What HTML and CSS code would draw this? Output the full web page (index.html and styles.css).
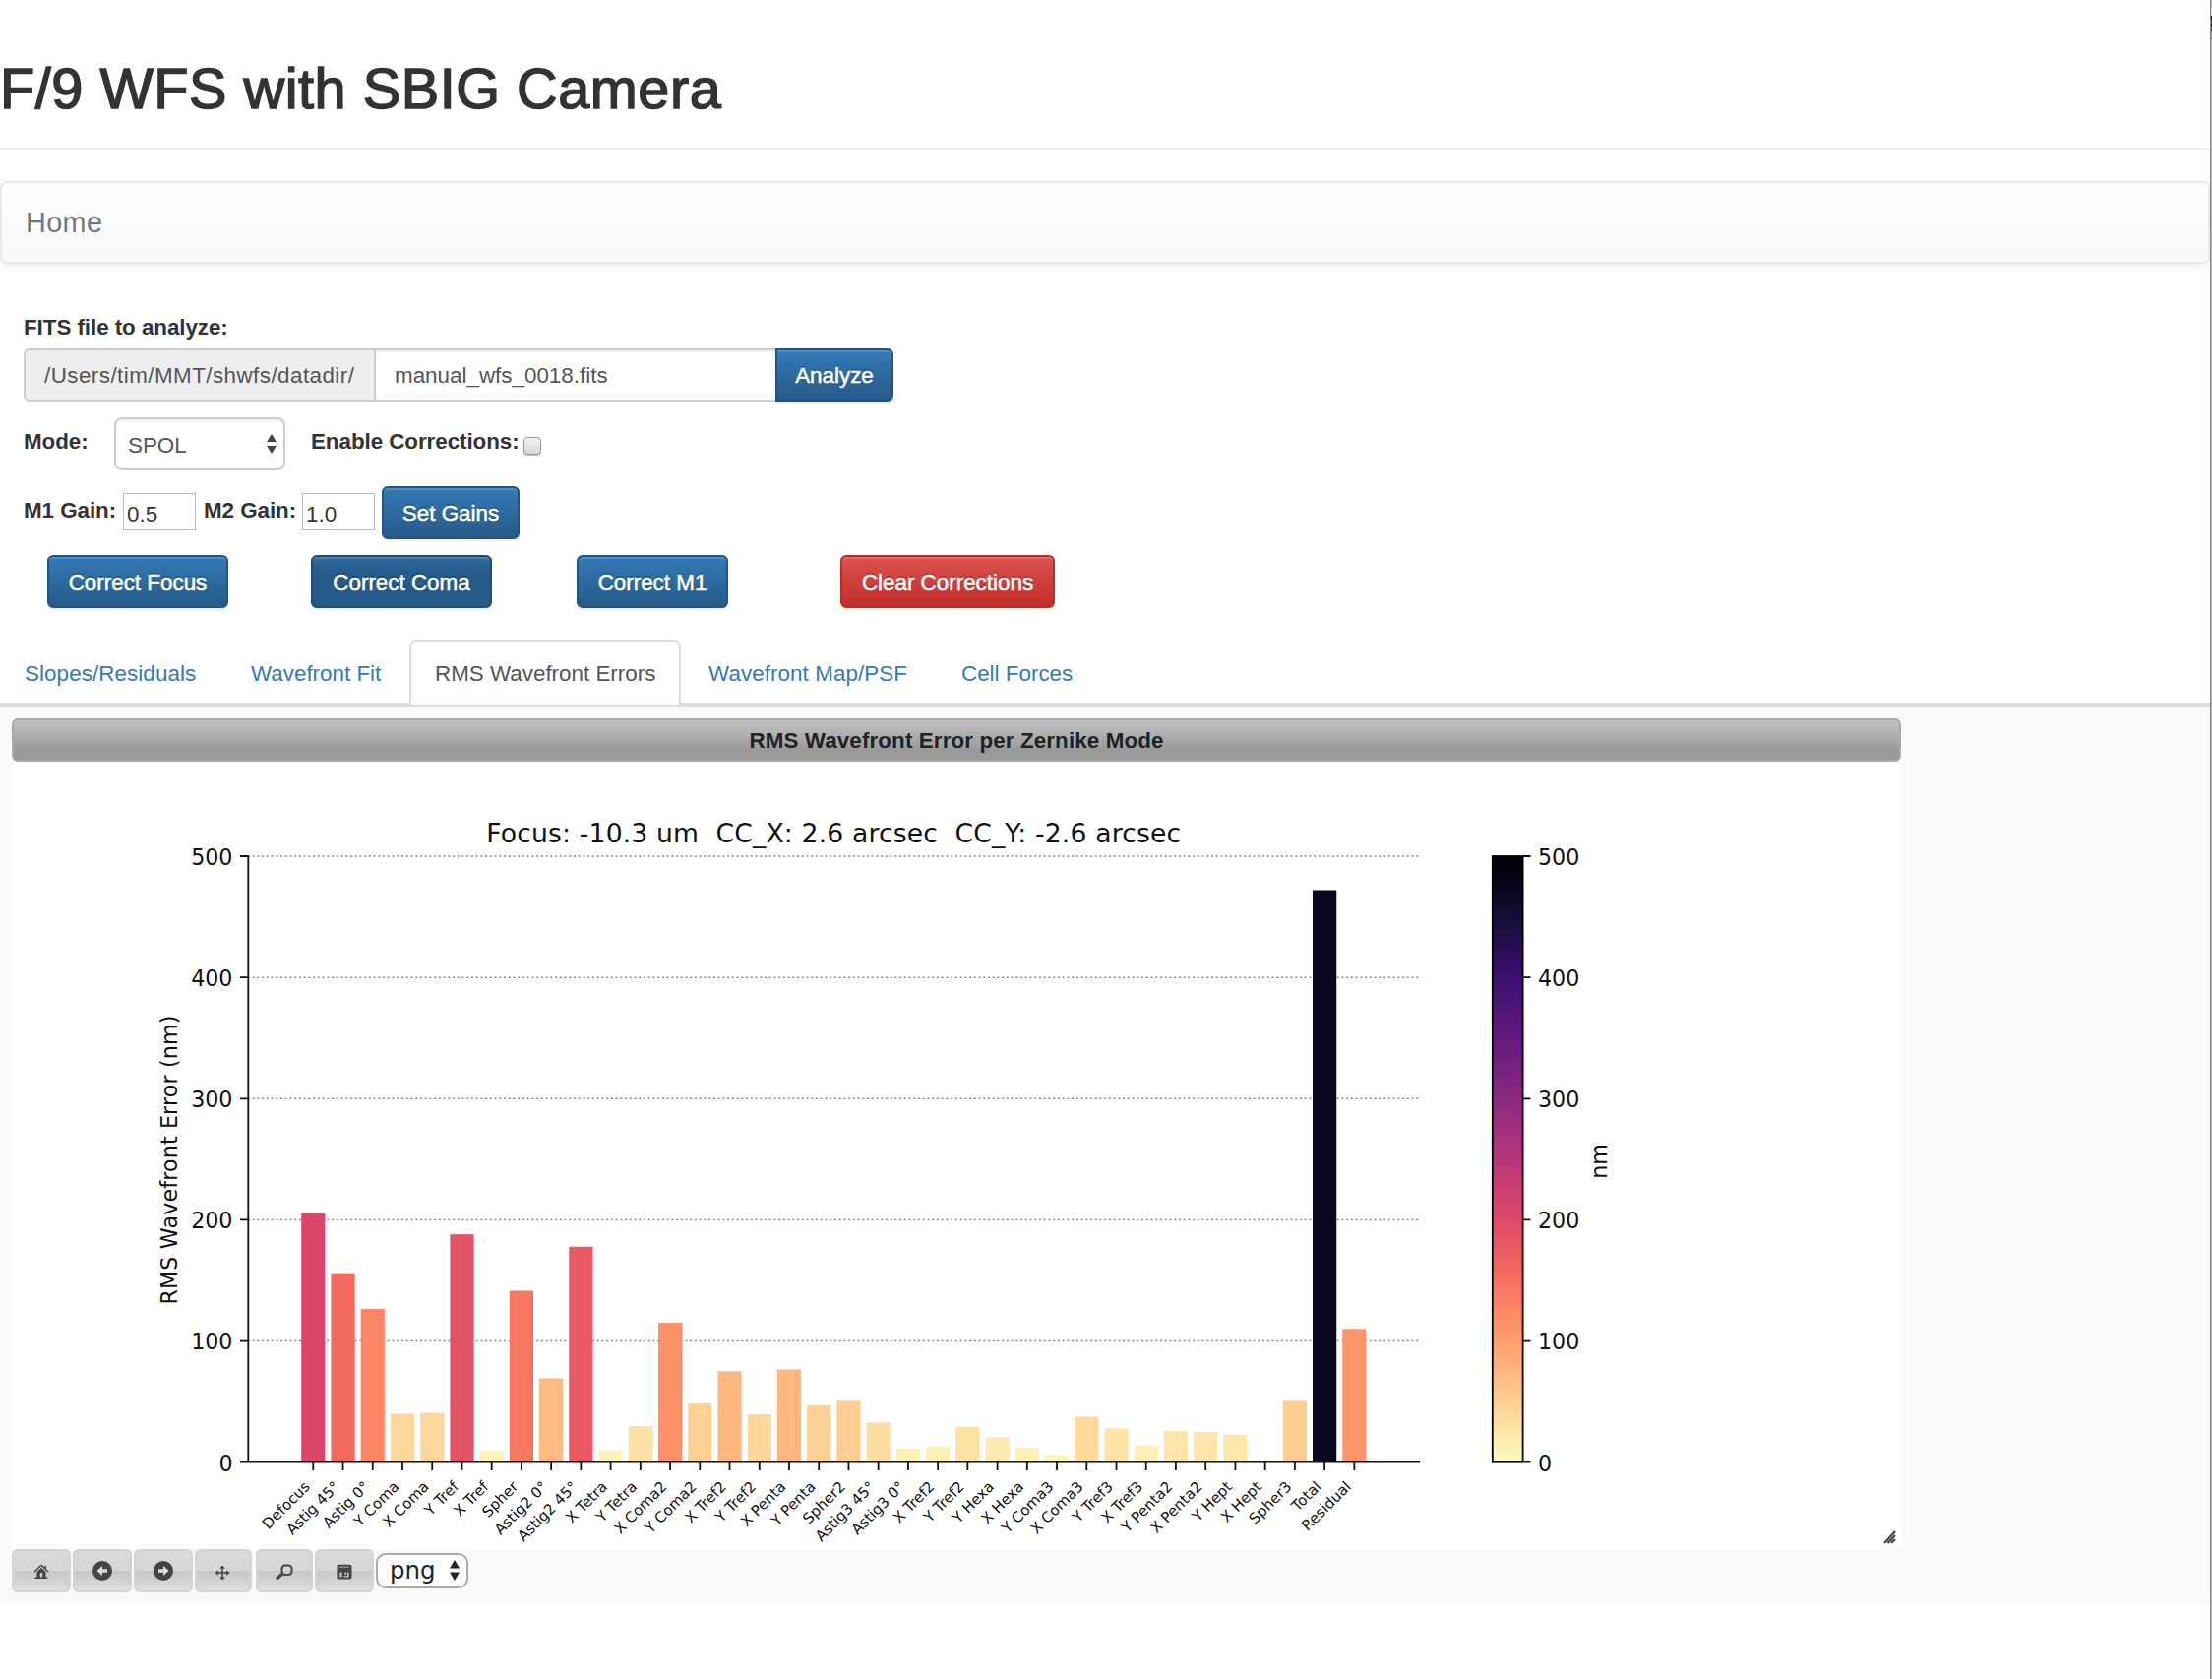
FILE: index.html
```html
<!DOCTYPE html>
<html lang="en">
<head>
<meta charset="utf-8">
<title>F/9 WFS with SBIG Camera</title>
<link rel="stylesheet" href="styles.css">
</head>
<body>
<div class="page">
  <header class="page-header"><h1><span>F/9 WFS with SBIG Camera</span></h1></header>
  <nav class="navbar"><a class="brand">Home</a></nav>

  <form class="controls">
    <label class="file-label"><span>FITS file to analyze:</span></label>
    <div class="input-group">
      <span class="addon"><span>/Users/tim/MMT/shwfs/datadir/</span></span>
      <span class="file-input"><span>manual_wfs_0018.fits</span></span>
      <button type="button" class="btn analyze">Analyze</button>
    </div>
    <div class="mode-row">
      <label class="mode-label">Mode:</label>
      <span class="mode-select"><span>SPOL</span>
        <svg width="10" height="20" viewBox="0 0 10 20"><path d="M5 0l5 8H0zM5 20l5-8H0z" fill="#444"/></svg>
      </span>
      <label class="enable-label"><span>Enable Corrections:</span></label>
      <span class="checkbox"></span>
    </div>
    <div class="gain-row">
      <label class="m1-label">M1 Gain:</label><span class="gain">0.5</span>
      <label class="m2-label">M2 Gain:</label><span class="gain">1.0</span>
      <button type="button" class="btn set-gains">Set Gains</button>
    </div>
    <div class="action-row">
      <button type="button" class="btn focus"><span>Correct Focus</span></button>
      <button type="button" class="btn coma"><span>Correct Coma</span></button>
      <button type="button" class="btn m1"><span>Correct M1</span></button>
      <button type="button" class="btn clear"><span>Clear Corrections</span></button>
    </div>
  </form>

  <ul class="tabs">
    <li class="t1"><span>Slopes/Residuals</span></li>
    <li class="t2"><span>Wavefront Fit</span></li>
    <li class="t3 active"><span>RMS Wavefront Errors</span></li>
    <li class="t4"><span>Wavefront Map/PSF</span></li>
    <li class="t5"><span>Cell Forces</span></li>
  </ul>

  <section class="panel">
    <div class="figure">
      <div class="titlebar"><span>RMS Wavefront Error per Zernike Mode</span></div>
      <svg id="chart" class="chart" width="1920" height="800" viewBox="12 774 1920 800">
        <defs><linearGradient id="magma" x1="0" y1="0" x2="0" y2="1"></linearGradient></defs>
        <g id="grid" class="grid"></g>
        <g id="bars"></g>
        <g id="ticks" class="axis"></g>
        <path class="axis" d="M252.3 869.2V1486.6M251.4 1485.7H1443"/>
        <rect x="1516.8" y="870" width="30.8" height="615.7" fill="url(#magma)" class="axis-box"/>
        <text class="chart-title" x="847.2" y="856" text-anchor="middle" textLength="706" xml:space="preserve">Focus: -10.3 um  CC_X: 2.6 arcsec  CC_Y: -2.6 arcsec</text>
        <text class="axis-label" transform="translate(180 1178.6) rotate(-90)" text-anchor="middle" textLength="294">RMS Wavefront Error (nm)</text>
        <text class="axis-label" transform="translate(1633 1180) rotate(-90)" text-anchor="middle">nm</text>
        <g id="labels" class="small"></g>
        <path d="M1915 1568L1926 1556M1918.500 1568L1926 1560M1922 1568L1926 1564" stroke="#444" stroke-width="2.200" fill="none"/>
      </svg>
    </div>
    <div class="toolbar">
      <button type="button" class="tool w60"><svg width="16" height="16" viewBox="0 0 16 16"><path d="M8 1.2L1 8M8 1.2L15 8M12.3 5V1.8" stroke="#444" stroke-width="1.5" fill="none"/><path d="M3.500 8L8 3.800 12.500 8v5.500h2V15h-13v-1.500h2zM6.800 9v4.500h2.400V9z" fill="#444" fill-rule="evenodd"/></svg></button>
      <button type="button" class="tool w60"><svg class="round" width="20" height="20" viewBox="0 0 20 20"><circle cx="10" cy="10" r="10" fill="#444"/><path d="M4.500 10l5.500-5v3.300h5v3.400h-5V15z" fill="#ddd"/></svg></button>
      <button type="button" class="tool w60"><svg class="round" width="20" height="20" viewBox="0 0 20 20"><circle cx="10" cy="10" r="10" fill="#444"/><path d="M15.500 10L10 5v3.300H5v3.400h5V15z" fill="#ddd"/></svg></button>
      <button type="button" class="tool w58 gap4"><svg class="down" width="16" height="16" viewBox="0 0 16 16"><path d="M8 2v12M2 8h12" stroke="#444" stroke-width="1.500"/><path d="M8 .5l2.800 3.300H5.200zM8 15.500l2.800-3.300H5.200zM.5 8l3.300-2.800v5.600zM15.500 8l-3.300-2.800v5.600z" fill="#444"/></svg></button>
      <button type="button" class="tool w58"><svg width="18" height="16" viewBox="0 0 18 16"><rect x="6.500" y="1.500" width="10" height="9.500" rx="3.500" fill="none" stroke="#444" stroke-width="2"/><path d="M7 10.200L2 14.500" stroke="#444" stroke-width="3" stroke-linecap="round"/></svg></button>
      <button type="button" class="tool w60"><svg width="16" height="16" viewBox="0 0 16 16"><rect x=".5" y=".8" width="15" height="14.700" rx="2" fill="#444"/><path d="M3 3.200h10" stroke="#999" stroke-width="1.300"/><path d="M3.500 8.500h2v5h-2zM8.500 8.500h1.500v2.500H8.500zM11 8.500h1.500v5H7.500v-1.300H11z" fill="#ccc"/></svg></button>
      <span class="format"><span>png</span><svg width="10" height="21" viewBox="0 0 10 21"><path d="M5 0l5 8.500H0zM5 21l5-8.500H0z" fill="#222"/></svg></span>
    </div>
  </section>
</div>
<div class="edge"></div>
<script src="chart.js"></script>
</body>
</html>
```
FILE: styles.css
```css
* { box-sizing: border-box; }
body { margin: 0; display: flex; width: 2248px; height: 1706px; overflow: hidden; background: #fff; color: #333; font: 22.4px/32px "Liberation Sans", Arial, sans-serif; }
.page { width: 2246px; height: 1706px; }
.edge { width: 2px; border-left: 1px solid #868686; background: linear-gradient(#b4b4b4 0 8px, #ddd 8px 16px, #111 16px 20px, #555 20px 24px, #111 24px 26px, #555 26px 30px, #222 30px 32px, #999 32px 39px, #666 39px 40px, #b4b4b4 40px); }
.page-header { height: 152px; padding-top: 58px; border-bottom: 2px solid #eee; }
h1 { margin: 0; font-size: 57.6px; line-height: 64px; font-weight: 400; letter-spacing: .55px; -webkit-text-stroke: 1.5px #333; white-space: nowrap; }
.navbar { height: 84px; margin-top: 32px; padding: 0 24px; display: flex; align-items: center; border: 2px solid #e7e7e7; border-radius: 7px; background: linear-gradient(#fff, #f8f8f8); box-shadow: 0 2px 8px rgba(0,0,0,.075); }
.brand { font-size: 28.8px; letter-spacing: .4px; color: #777; }
.controls { padding-left: 24px; margin-top: 46px; height: 336px; white-space: nowrap; }
label { display: block; font-weight: 700; letter-spacing: -.06px; }
.file-label { height: 40px; line-height: 37px; }
.input-group { display: flex; height: 54px; }
.addon, .file-input { border: 2px solid #ccc; line-height: 52px; color: #555; }
.addon { width: 356px; border-right: 0; background: #eee; border-radius: 6px 0 0 6px; padding-left: 19px; letter-spacing: .45px; }
.file-input { width: 408px; border-right: 0; padding-left: 19px; box-shadow: inset 0 2px 2px rgba(0,0,0,.075); }
.btn { height: 54px; padding: 2px 0 0; border: 2px solid #245580; border-radius: 6px; color: #fff; font: 22.4px/48px "Liberation Sans", Arial, sans-serif; background: linear-gradient(#337ab7, #265a88); box-shadow: inset 0 2px 0 rgba(255,255,255,.15), 0 2px 2px rgba(0,0,0,.075); text-shadow: 0 -2px 0 rgba(0,0,0,.2); -webkit-text-stroke: .5px #fff; }
.analyze { width: 120px; border-radius: 0 6px 6px 0; }
.mode-row { display: flex; height: 54px; margin-top: 16px; line-height: 49px; }
.mode-label { width: 92px; }
.mode-select { width: 174px; border: 2px solid #ccc; border-radius: 8px; padding: 2px 7px 0 12px; color: #555; display: flex; justify-content: space-between; box-shadow: inset 0 2px 2px rgba(0,0,0,.075); }
.mode-select svg { margin-top: 13px; }
.enable-label { width: 216px; margin-left: 26px; }
.checkbox { width: 18px; height: 18px; margin-top: 20px; border: 1.500px solid #999; border-radius: 4px; background: linear-gradient(#f2f2f2, #d8d8d8); box-shadow: 0 1px 1px #bbb; }
.gain-row { display: flex; height: 54px; margin-top: 16px; line-height: 49px; }
.m1-label { width: 101px; }
.m2-label { width: 100px; margin-left: 8px; }
.gain { width: 74px; height: 38px; margin-top: 7px; border: 1px solid #bbb; padding-left: 3px; line-height: 41px; }
.set-gains { width: 140px; margin-left: 7px; }
.action-row { display: flex; margin-top: 16px; padding-left: 24px; }
.focus { width: 184px; }
.coma { width: 184px; margin-left: 84px; background: linear-gradient(#2d6ca2, #265a88 35%); border-color: #204d74; }
.m1 { width: 154px; margin-left: 86px; }
.clear { width: 218px; margin-left: 114px; background: linear-gradient(#d9534f, #c12e2a); border-color: #b92c28; }
.tabs { display: flex; height: 68px; margin: 0; padding: 0; list-style: none; border-bottom: 4px solid #ddd; color: #337ab7; white-space: nowrap; }
.tabs li { height: 66px; line-height: 69px; }
.tabs .t1 { padding-left: 25px; width: 255px; letter-spacing: .08px; }
.t2 { width: 161px; }
.t3 { width: 276px; padding-left: 24px; }
.tabs .active { border: 2px solid #ddd; border-bottom: 0; border-radius: 7px 7px 0 0; background: #fff; color: #555; line-height: 65px; }
.t4 { width: 257px; padding-left: 28px; margin-right: 28px; letter-spacing: .08px; }
.panel { height: 912px; padding: 12px 12px 0; background: #f9f9f9; }
.figure { width: 1920px; background: #fff; }
.titlebar { height: 44px; border: 2px solid #aaa; border-radius: 6px; background: linear-gradient(#c2c2c2, #a0a0a0 65%, #999 75%); color: #222; font-weight: 700; line-height: 41px; letter-spacing: .11px; text-align: center; }
.chart { display: block; font-family: "DejaVu Sans", sans-serif; fill: #111; }
.axis { stroke: #111; stroke-width: 1.800; fill: none; }
.axis-box { stroke: #000; stroke-width: 1.800; }
.axis-label, .num { font-size: 22.2px; }
.chart-title { font-size: 26.67px; white-space: pre; }
.small { font-size: 15px; }
.grid { stroke: #808080; stroke-width: 1.500; stroke-dasharray: 1.800 2.930; }
.toolbar { display: flex; gap: 2px; height: 44px; }
.tool { height: 44px; padding: 0; border: 2px solid #d3d3d3; border-radius: 6px; background: linear-gradient(#dadada, #d6d6d6 50%, #c6c6c6 50%, #dedede); display: flex; align-items: center; justify-content: center; }
.tool svg { margin-top: 2px; }
.tool .down { margin-top: 3px; margin-right: 2px; }
.tool .round { margin-top: 0; }
.w60 { width: 60px; }
.w58 { width: 58px; }
.gap4 { margin-right: 2px; }
.format { width: 94px; height: 36px; margin-top: 4px; padding: 0 7px 0 12px; border: 2px solid #aaa; border-radius: 10px; background: #fff; color: #222; font: 24.5px/31px "DejaVu Sans", sans-serif; display: flex; justify-content: space-between; }
.format svg { margin-top: 5px; }
```
FILE: chart.js
```js
const modes = [
  ['Defocus', 205.6], ['Astig 45°', 156], ['Astig 0°', 126.4], ['Y Coma', 40], ['X Coma', 40.6],
  ['Y Tref', 188], ['X Tref', 9.5], ['Spher', 141.5], ['Astig2 0°', 69.3], ['Astig2 45°', 177.8],
  ['X Tetra', 10], ['Y Tetra', 29.8], ['X Coma2', 115], ['Y Coma2', 48.4], ['X Tref2', 75],
  ['Y Tref2', 39.5], ['X Penta', 76.6], ['Y Penta', 46.8], ['Spher2', 50.6], ['Astig3 45°', 32.7],
  ['Astig3 0°', 11.4], ['X Tref2', 12.7], ['Y Tref2', 29], ['Y Hexa', 20.6], ['X Hexa', 11.9],
  ['Y Coma3', 6], ['X Coma3', 37.6], ['Y Tref3', 27.9], ['X Tref3', 14], ['Y Penta2', 25.7],
  ['X Penta2', 24.9], ['Y Hept', 22.5], ['X Hept', 1.3], ['Spher3', 50.6], ['Total', 472], ['Residual', 110]
];

// Reversed magma: position 0 is the lightest colour.
const magma = [
  [0, 252, 253, 191], [0.1, 254, 206, 145], [0.2, 254, 159, 109], [0.3, 247, 111, 92],
  [0.4, 222, 73, 104], [0.5, 182, 54, 121], [0.6, 140, 41, 129], [0.7, 100, 26, 128],
  [0.8, 59, 15, 112], [0.9, 20, 14, 54], [0.95, 7, 6, 28], [1, 0, 0, 4]
];
function colour(v) {
  const t = v / 500;
  let i = 1;
  while (magma[i][0] < t) i++;
  const a = magma[i - 1], b = magma[i], f = (t - a[0]) / (b[0] - a[0]);
  return 'rgb(' + [1, 2, 3].map(k => Math.round(a[k] + (b[k] - a[k]) * f)).join(',') + ')';
}

function add(parent, tag, attrs, text) {
  const el = document.createElementNS('http://www.w3.org/2000/svg', tag);
  for (const k in attrs) el.setAttribute(k, attrs[k]);
  if (text !== undefined) el.textContent = text;
  document.getElementById(parent).appendChild(el);
}

const zero = 1485.7, unit = 1.2314, first = 318.3, step = 30.23, barWidth = 24.2;

[...magma].reverse().forEach(s => add('magma', 'stop', { offset: 1 - s[0], 'stop-color': `rgb(${s[1]},${s[2]},${s[3]})` }));

for (let v = 0; v <= 500; v += 100) {
  const y = zero - v * unit;
  if (v) add('grid', 'path', { d: `M252 ${y}H1442` });
  add('ticks', 'path', { d: `M244 ${y}H252M1548 ${y}H1555.500` });
  add('chart', 'text', { x: 236.5, y: y + 8.8, 'text-anchor': 'end', class: 'num' }, v);
  add('chart', 'text', { x: 1563, y: y + 8.8, class: 'num' }, v);
}

modes.forEach(([name, value], i) => {
  const x = first + i * step;
  add('bars', 'rect', { x: x - barWidth / 2, y: zero - value * unit, width: barWidth, height: value * unit, fill: colour(value) });
  add('ticks', 'path', { d: `M${x} 1486V1494` });
  add('labels', 'text', { transform: `translate(${x - 2.5} 1511.5) rotate(-45)`, 'text-anchor': 'end' }, name);
});
```
